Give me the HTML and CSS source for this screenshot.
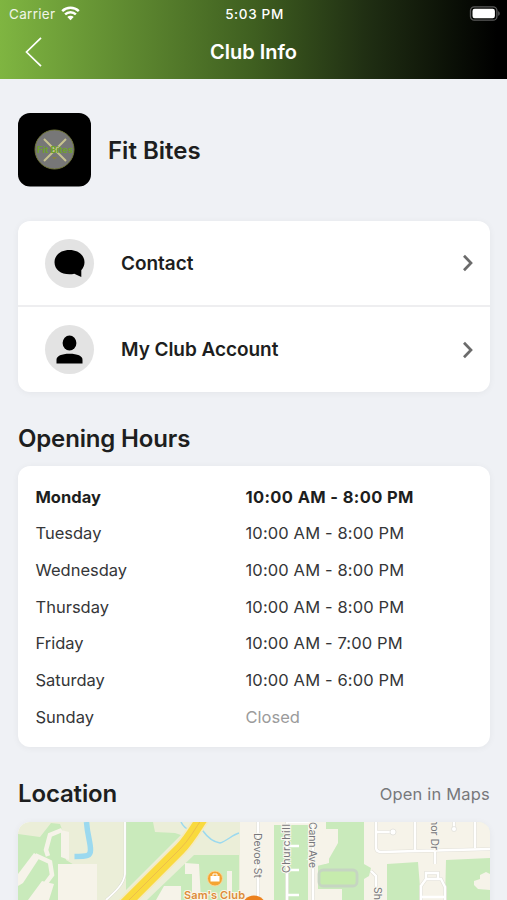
FILE: index.html
```html
<!DOCTYPE html>
<html lang="en">
<head>
    <meta charset="UTF-8">
    <meta name="viewport" content="width=device-width, initial-scale=1.0">
    <title>Club Info</title>
    <link rel="stylesheet" href="styles.css">
</head>
<body>
    <header class="header">
        <div class="status-bar">
            <div class="carrier">
                <span>Carrier</span>
                <svg width="19" height="15" viewBox="0 0 19 15">
                    <path d="M1.2 5.2a12 12 0 0 1 16.6 0M4.1 8.3a7.8 7.8 0 0 1 10.8 0" fill="none" stroke="#fff" stroke-width="2.5"/>
                    <path d="M9.5 14.2 6.3 11a4.5 4.5 0 0 1 6.4 0z" fill="#fff"/>
                </svg>
            </div>
            <span class="time">5:03 PM</span>
            <svg class="battery" width="31" height="15" viewBox="0 0 31 15">
                <rect x="1.5" y=".8" width="26.4" height="13.4" rx="3.8" fill="none" stroke="#5b5b5b" stroke-width="1.3"/>
                <rect x="3.5" y="2.7" width="22.4" height="9.6" rx="2.2" fill="#fff"/>
                <path d="M29.2 5.2c2 .6 2 4 0 4.6z" fill="#5b5b5b"/>
            </svg>
        </div>
        <div class="nav-bar">
            <svg class="back" width="18" height="30" viewBox="0 0 18 30">
                <path d="M17 .8 2.5 15 17 29.2" fill="none" stroke="#fff" stroke-width="1.7"/>
            </svg>
            <h1 class="title">Club Info</h1>
        </div>
    </header>

    <main class="content">
        <div class="club">
            <svg class="club-logo" width="73" height="74" viewBox="0 0 73 74">
                <rect width="73" height="73.5" rx="12" fill="#000"/>
                <circle cx="36.5" cy="36.5" r="19.5" fill="#777" stroke="#73783c"/>
                <path d="M26 26l22 22M48 26 26 48" stroke="#c9c490" stroke-width="2"/>
                <text class="logo-text" x="19" y="40" textLength="36" lengthAdjust="spacingAndGlyphs">Fit Bites</text>
                <path d="M34 44h5l-2.5 2.5z" fill="#89833d"/>
            </svg>
            <h2 class="club-name">Fit Bites</h2>
        </div>

        <div class="card menu">
            <div class="menu-row">
                <span class="menu-icon">
                    <svg width="49" height="49" viewBox="0 0 49 49">
                        <path d="M24.5 11C33 11 39.5 16 39.5 23.2c0 3.1-1.2 5.8-3.2 8v6.8l-7-3.3c-1.5.4-3.1.6-4.8.6C15.8 35.3 9.5 30.3 9.5 23.2S15.800 11 24.5 11z"/>
                    </svg>
                </span>
                <span class="menu-label">Contact</span>
                <svg class="chevron" width="12" height="18" viewBox="0 0 12 18">
                    <path d="M2 1.8 9 9l-7 7.2" fill="none" stroke="#6b6b6b" stroke-width="2.7"/>
                </svg>
            </div>
            <div class="menu-row">
                <span class="menu-icon">
                    <svg width="49" height="49" viewBox="0 0 49 49">
                        <ellipse cx="24.5" cy="18" rx="6.9" ry="7.6"/>
                        <path d="M11.5 38.5v-3.8c0-3.6 5-5.9 13-5.9s13 2.3 13 5.9v3.8z"/>
                    </svg>
                </span>
                <span class="menu-label">My Club Account</span>
                <svg class="chevron" width="12" height="18" viewBox="0 0 12 18">
                    <path d="M2 1.8 9 9l-7 7.2" fill="none" stroke="#6b6b6b" stroke-width="2.7"/>
                </svg>
            </div>
        </div>

        <h2 class="section-title hours-title">Opening Hours</h2>
        <div class="card hours">
            <div class="hours-row today"><span>Monday</span><span class="hours-time">10:00 AM - 8:00 PM</span></div>
            <div class="hours-row"><span>Tuesday</span><span class="hours-time">10:00 AM - 8:00 PM</span></div>
            <div class="hours-row"><span>Wednesday</span><span class="hours-time">10:00 AM - 8:00 PM</span></div>
            <div class="hours-row"><span>Thursday</span><span class="hours-time">10:00 AM - 8:00 PM</span></div>
            <div class="hours-row"><span>Friday</span><span class="hours-time">10:00 AM - 7:00 PM</span></div>
            <div class="hours-row"><span>Saturday</span><span class="hours-time">10:00 AM - 6:00 PM</span></div>
            <div class="hours-row"><span>Sunday</span><span class="hours-time closed">Closed</span></div>
        </div>

        <div class="location-head">
            <h2 class="section-title">Location</h2>
            <span class="open-maps">Open in Maps</span>
        </div>
        <div class="card map">
            <svg width="472" height="78" viewBox="18 822 472 78">
                <rect x="18" y="822" width="472" height="78" fill="#ebeed8"/>
                <!-- parks -->
                <g fill="#c9eabb">
                    <path d="M18 834l22 3 11-14 9 1 3 8 3 28 10 6-8 34H18z"/>
                    <path d="M126 822h27l2 10 20 1 6 2-55 55z"/>
                    <path d="M239 855v45h-92l47-45z"/>
                </g>
                <path d="M240 822h250v78H240z" fill="#f6f3e9"/>
                <g fill="#c9eabb">
                    <path d="M274 825h34v75h-34z"/>
                    <path d="M326 822h38v42l7 4-2 8-5 3v21h-22v-11h-24v-25h8l12-21V829h-12z"/>
                    <path d="M387 864l31-2 3 38h-34zM446 860l44-2v16l-4-2-6 3v4l-6 2v4l4 4 12 1v10h-45z"/>
                </g>
                <!-- buildings -->
                <g fill="#f6f3e9">
                    <path d="M58 864h39v36H58zM61 830l8 2v28l-8-3zM185 863l14 1 2 36h-9v-26h-7zM164 886h17v14h-25zM227 871h5v29h-5zM28 900l14-19 12 3-5 16z"/>
                    <path d="M328 829h10l-1 15-8 12v7l-12 3-3-28z"/>
                </g>
                <path d="M19 883l18-27 13 6 2 13-6 8M48 856l-2-6 4-15 12-5" fill="none" stroke="#f6f3e9" stroke-width="4.5"/>
                <path d="M18 874l16-21 6 4-17 26-5 3z" fill="#f6f3e9"/>
                <!-- water -->
                <path d="M86.5 822c1 14 4 20 4 28 0 6-3 6.5-16 6.5" fill="none" stroke="#9bd9ef" stroke-width="5.5"/>
                <path d="M181 822c5 10 13 9 22 9 5 7 11 11 17 12 7-2 12-8 19-10" fill="none" stroke="#9bd9ef" stroke-width="1.5"/>
                <!-- roads -->
                <path d="M125 822v52c-1 10-10 18-19 26" fill="none" stroke="#d9dad1" stroke-width="2.6"/>
                <path d="M125 822v52c-1 10-10 18-19 26" fill="none" stroke="#fff" stroke-width="1.8"/>
                <path d="M203 817c-8 12-14 23-23 32l-57 57" fill="none" stroke="#f4eac0" stroke-width="15"/>
                <path d="M203 817c-8 12-14 23-23 32l-57 57" fill="none" stroke="#f9da3e" stroke-width="11.5"/>
                <path d="M203 817c-8 12-14 23-23 32l-57 57" fill="none" stroke="#edbd4a" stroke-width="1"/>
                <g fill="none" stroke="#e2e0d8" stroke-width="3.6">
                    <path d="M258 822v78M287 822v78M313 822v78M376 822v25q0 5 5 5l109-3M376 832h15M415 822v29M435 848v16M454 822v8M475 822v26M371 871l5 5v24M421 900v-14l5-7h15l4 8v13M426 879v-6h12v6"/>
                </g>
                <g fill="none" stroke="#fff" stroke-width="2.4">
                    <path d="M258 822v78M287 822v78M313 822v78M287 822h26M287 846h12M287 870h12M287 895h12M376 822v25q0 5 5 5l109-3M376 832h15M415 822v29M435 848v16M454 822v8M475 822v26M371 871l5 5v24M421 900v-14l5-7h15l4 8v13M421 897h24M426 879v-6h12v6"/>
                </g>
                <g fill="#fff" stroke="#dddcd5" stroke-width=".7"><circle cx="393" cy="832" r="3"/><circle cx="454" cy="829" r="2.5"/></g>
                <rect x="319" y="870" width="38" height="16" rx="4" fill="#c6ebad" stroke="#c6d5c2" stroke-width="2.8"/>
                <!-- street names -->
                <g class="street">
                    <text transform="translate(254 833) rotate(90)" textLength="45">Devoe St</text>
                    <text transform="translate(289.5 873) rotate(-90)" textLength="49">Churchill</text>
                    <text transform="translate(308.5 822) rotate(90)" textLength="46">Cann Ave</text>
                    <text transform="translate(431 819) rotate(90)" textLength="31">nor Dr</text>
                    <text transform="translate(373.5 887) rotate(90)">Sh</text>
                </g>
                <circle cx="215" cy="878.5" r="7.5" fill="#f5a432" stroke="#f8d89c"/>
                <path d="M210.5 876h9v5.5h-9z" fill="#fff"/>
                <path d="M213 876v-2h4v2" fill="none" stroke="#fff"/>
                <text class="place" x="184" y="898.5" textLength="61">Sam's Club</text>
                <circle cx="254" cy="908" r="12.5" fill="#ec811d"/>
            </svg>
        </div>
    </main>
</body>
</html>
```

FILE: styles.css
```css
* {
    box-sizing: border-box;
}
body {
    margin: 0;
    height: 900px;
    overflow: hidden;
    background-color: #eff1f5;
    color: #1d1e20;
    font-family: Inter, "Liberation Sans", sans-serif;
}
h1, h2 {
    margin: 0;
}
svg {
    display: block;
}
.header {
    height: 79px;
    background: linear-gradient(90deg, #7fb541 0%, #3f5f20 50%, #202f13 72%, #000 98%);
    color: #fff;
}
.status-bar {
    display: grid;
    grid-template-columns: 1fr auto 1fr;
    align-items: center;
    height: 27px;
    padding: 0 7px 0 9px;
    font-size: 13.5px;
}
.carrier {
    display: flex;
    align-items: center;
    gap: 6px;
    letter-spacing: 0.3px;
    color: #f0f5e8;
}
.time {
    font-weight: 500;
    letter-spacing: 0.65px;
}
.battery {
    justify-self: end;
}
.nav-bar {
    display: grid;
    grid-template-columns: 1fr auto 1fr;
    align-items: center;
    height: 50px;
    padding: 0 24px;
}
.title {
    font-size: 20px;
    font-weight: 600;
    line-height: 26px;
}
.content {
    padding: 34px 17px 0 18px;
}
.club {
    display: flex;
    align-items: center;
    gap: 17px;
    margin-bottom: 34px;
}
.club-name {
    font-size: 24px;
    font-weight: 600;
}
.logo-text {
    font-size: 8.5px;
    font-weight: 700;
    fill: #6fa32b;
}
.card {
    background-color: #fff;
    border-radius: 12px;
    box-shadow: 0 1px 7px rgba(0, 0, 0, 0.05);
}
.menu-row {
    display: flex;
    align-items: center;
    height: 84px;
    padding: 0 16px 0 27px;
}
.menu-row + .menu-row {
    height: 87px;
    border-top: 2px solid #eeeef0;
}
.menu-icon {
    width: 49px;
    height: 49px;
    border-radius: 50%;
    background-color: #e3e3e3;
}
.menu-label {
    flex: 1;
    margin-left: 27px;
    font-size: 19px;
    font-weight: 600;
    letter-spacing: -0.05px;
}
.section-title {
    font-size: 24px;
    font-weight: 600;
    line-height: 30px;
    letter-spacing: -0.15px;
}
.hours-title {
    margin: 32px 0 12px;
}
.hours {
    height: 281px;
    padding: 12.5px 17.5px;
}
.hours-row {
    display: grid;
    grid-template-columns: 210px 1fr;
    font-size: 16.5px;
    line-height: 36.67px;
    color: #353638;
}
.hours-time {
    letter-spacing: 0.13px;
}
.today {
    font-weight: 700;
    color: #1d1e20;
}
.today .hours-time {
    letter-spacing: 0.37px;
}
.closed {
    letter-spacing: 0;
    color: #9b9b9b;
}
.location-head {
    display: flex;
    align-items: center;
    justify-content: space-between;
    padding: 32px 0 13px;
}
.open-maps {
    font-size: 16.5px;
    letter-spacing: 0.18px;
    color: #77787b;
}
.map {
    height: 90px;
    overflow: hidden;
}
.street {
    font-size: 10.5px;
    fill: #77777b;
    stroke: #f8f6ee;
    stroke-width: 2px;
    paint-order: stroke;
}
.place {
    font-size: 11px;
    font-weight: 600;
    fill: #dd8c39;
    stroke: #fbf6e8;
    stroke-width: 2px;
    paint-order: stroke;
}
```
